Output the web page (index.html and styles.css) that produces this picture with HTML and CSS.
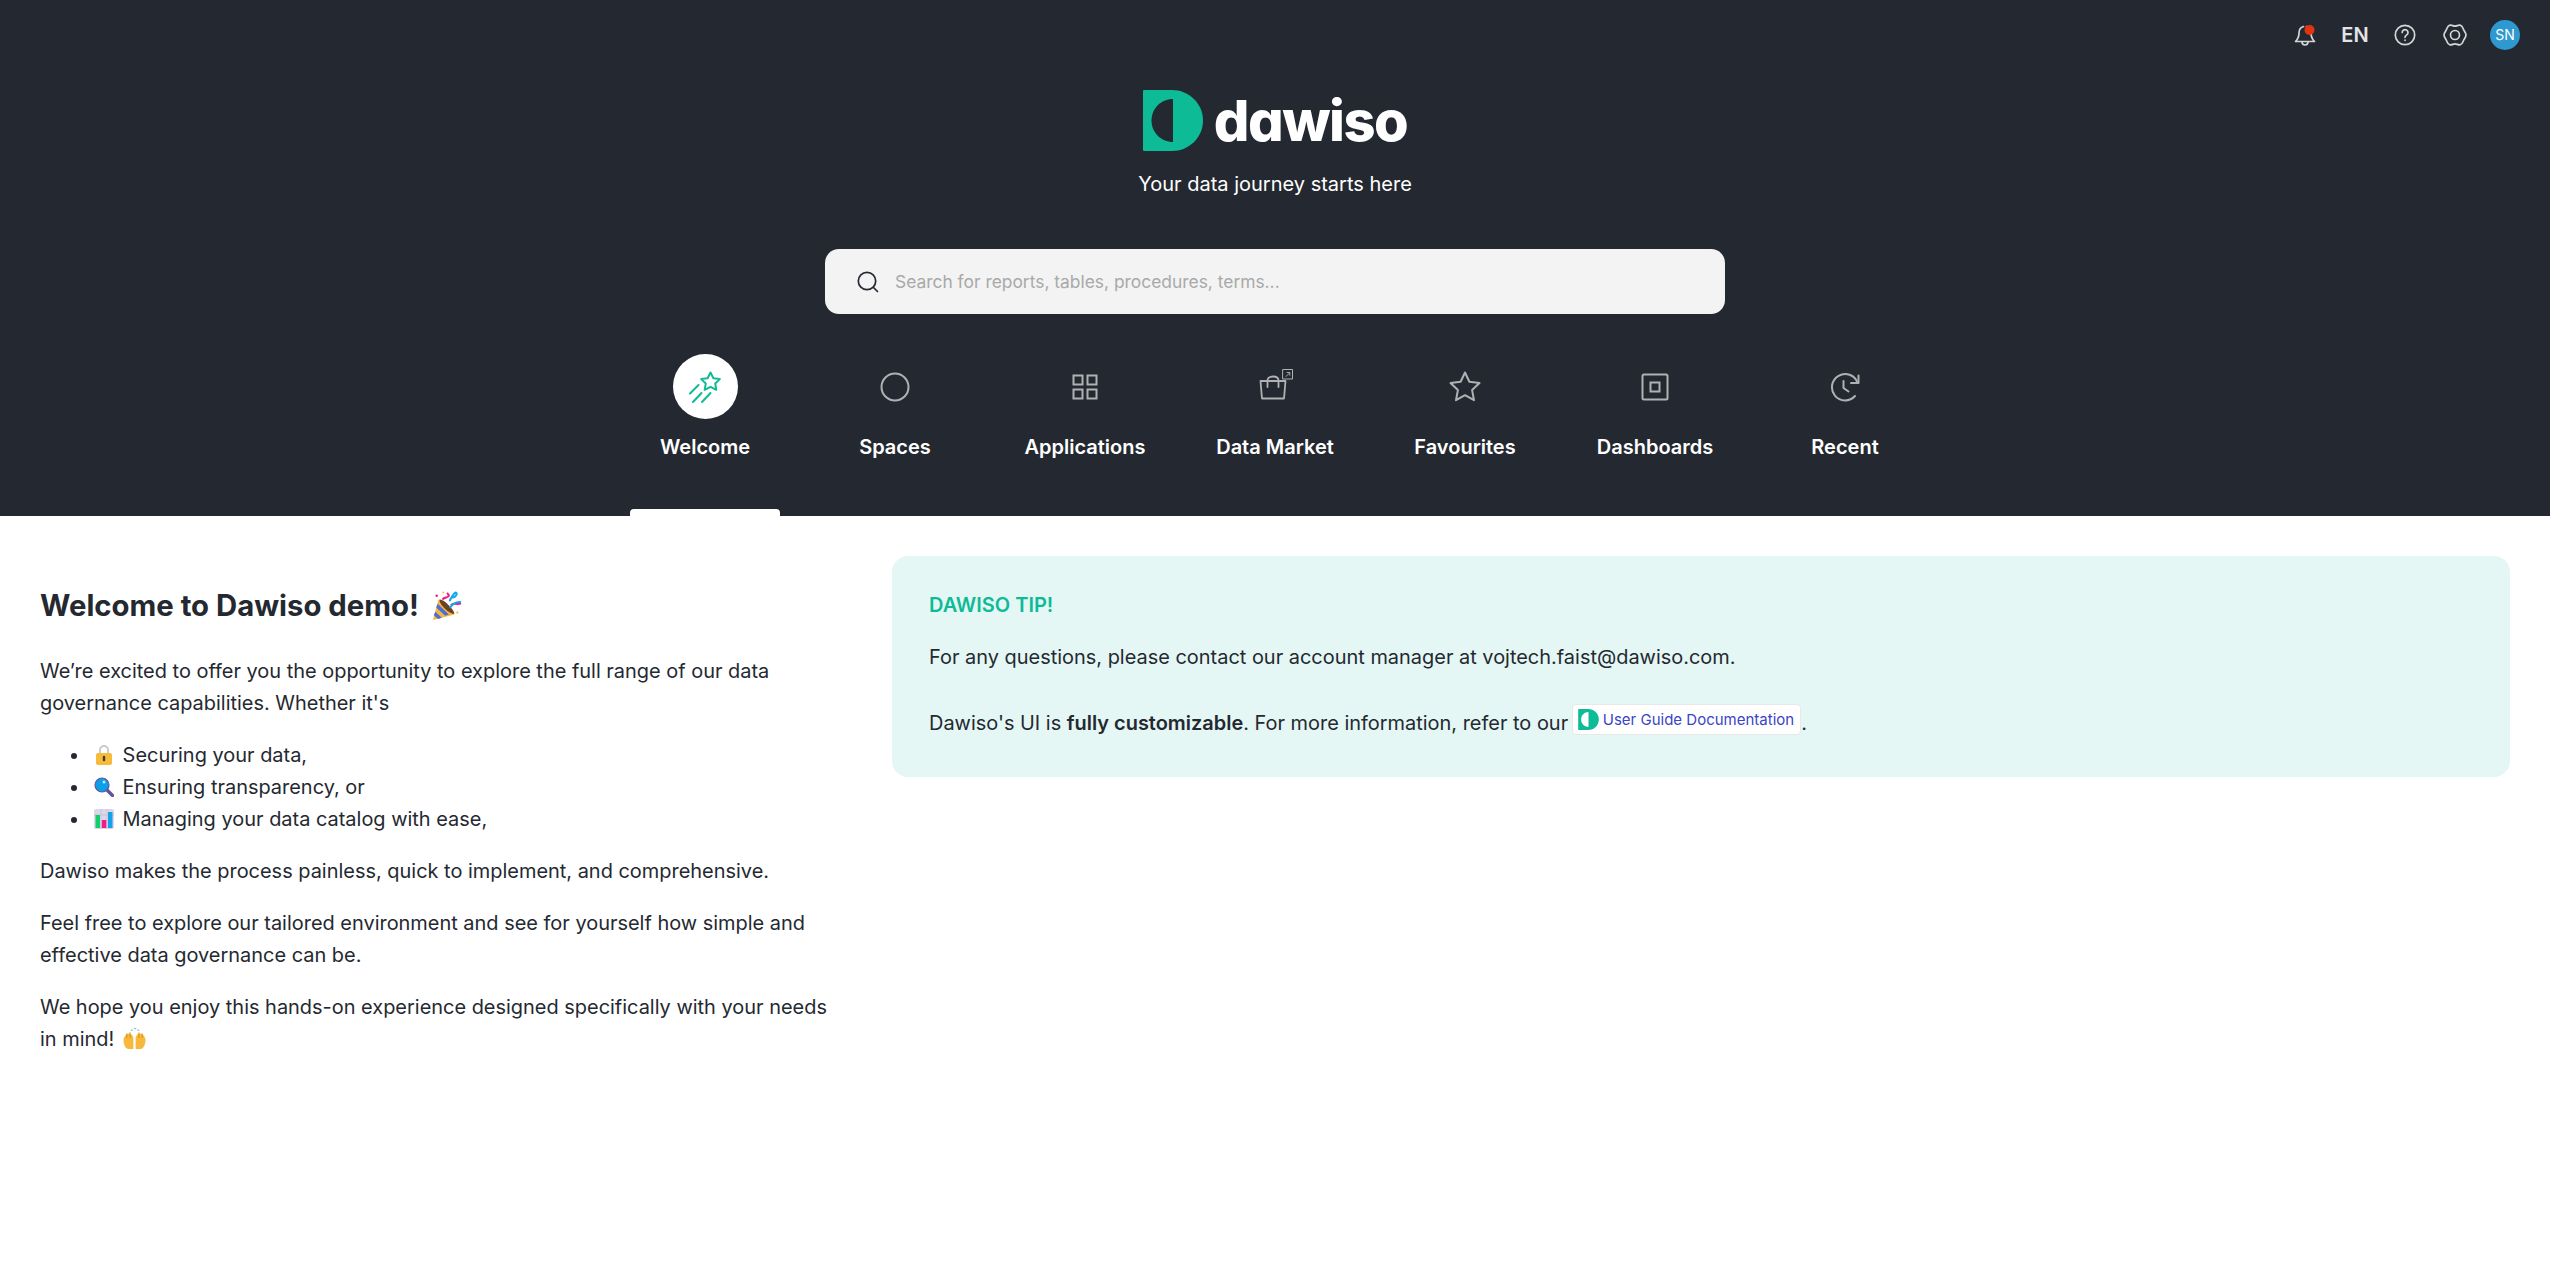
FILE: index.html
```html
<!DOCTYPE html>
<html lang="en">
<head>
    <meta charset="UTF-8">
    <title>Dawiso</title>
    <link rel="stylesheet" href="styles.css">
</head>
<body>
    <header class="hero">
        <div class="topbar">
            <span class="top-icon">
                <svg width="22" height="24" viewBox="0 0 22 24" fill="none" stroke="#d4d5d7" stroke-width="1.7" stroke-linecap="round" stroke-linejoin="round">
                    <path d="M9.500 3.500C6 4.500 5 7 5 10c0 4-1 6-3.500 8.500h19C18 16 17 14 17 10c0-3-1-5.500-4.500-6.500"/>
                    <path d="M8 18.800c0 2 1.300 3.200 3 3.200s3-1.200 3-3.200"/>
                    <circle cx="15.500" cy="7" r="5" fill="#e5330f" stroke="none"/>
                </svg>
            </span>
            <span class="top-icon lang">EN</span>
            <span class="top-icon">
                <svg width="22" height="22" viewBox="0 0 22 22" fill="none" stroke="#d4d5d7" stroke-width="1.7" stroke-linecap="round">
                    <circle cx="11" cy="11" r="9.700"/>
                    <path d="M8.200 8.500a2.900 2.900 0 1 1 4.500 2.400c-1 .7-1.700 1.200-1.700 2.400"/>
                    <path d="M11 16.200v.1"/>
                </svg>
            </span>
            <span class="top-icon">
                <svg width="24" height="24" viewBox="0 0 24 24" fill="none" stroke="#d4d5d7" stroke-width="1.7" stroke-linejoin="round">
                    <path d="M12 3.200C14 3.200 15 1.800 17 2.200 19.500 2.700 19.800 5 20.500 6.500 21.200 8 23 10 23 12 23 14 21.200 16 20.500 17.500 19.800 19 19.500 21.300 17 21.800 15 22.200 14 20.800 12 20.800 10 20.800 9 22.200 7 21.800 4.500 21.300 4.200 19 3.500 17.500 2.800 16 1 14 1 12 1 10 2.800 8 3.500 6.500 4.200 5 4.500 2.700 7 2.200 9 1.800 10 3.200 12 3.200Z"/>
                    <circle cx="12" cy="12" r="4.500"/>
                </svg>
            </span>
            <span class="top-icon avatar">SN</span>
        </div>

        <div class="brand">
            <svg class="brand-mark" width="60" height="61" viewBox="0 0 60 61">
                <path d="M1 0h28c17 0 31 13.500 31 30.500S46 61 29 61H1a1 1 0 0 1-1-1V1a1 1 0 0 1 1-1z" fill="#0dbb97"/>
                <path d="M30 9v43C18 52 8.500 42.500 8.500 30.500S18 9 30 9z" fill="#242931"/>
            </svg>
            <span class="brand-name">dawiso</span>
        </div>
        <p class="tagline">Your data journey starts here</p>

        <div class="search">
            <svg width="22" height="22" viewBox="0 0 22 22" fill="none" stroke="#242931" stroke-width="1.700" stroke-linecap="round">
                <circle cx="10" cy="10" r="8.700"/>
                <path d="M16.500 16.500l4 4"/>
            </svg>
            <span class="search-hint">Search for reports, tables, procedures, terms...</span>
        </div>

        <nav class="tabs">
            <a class="tab active">
                <span class="tab-icon">
                    <svg width="36" height="36" viewBox="0 0 36 36" fill="none" stroke="#0dbb97" stroke-width="2" stroke-linecap="round" stroke-linejoin="round">
                        <path d="M23.500 3.500l2.900 5.800 6.400.8-4.600 4.400 1.100 6.300-5.800-3-5.800 3 1.100-6.300-4.600-4.400 6.400-.8z"/>
                        <path d="M3 24.500l8.500-8.500M6 33l8.500-9M15 33l8.500-9"/>
                    </svg>
                </span>
                <span class="tab-label">Welcome</span>
            </a>
            <a class="tab">
                <span class="tab-icon">
                    <svg width="30" height="30" viewBox="0 0 30 30" fill="none" stroke="#b0b1b3" stroke-width="2"><circle cx="15" cy="15" r="13.500"/></svg>
                </span>
                <span class="tab-label">Spaces</span>
            </a>
            <a class="tab">
                <span class="tab-icon">
                    <svg width="26" height="26" viewBox="0 0 26 26" fill="none" stroke="#b0b1b3" stroke-width="2">
                        <rect x="1.500" y="1.500" width="9" height="9"/>
                        <rect x="15.500" y="1.500" width="9" height="9"/>
                        <rect x="1.500" y="15.500" width="9" height="9"/>
                        <rect x="15.500" y="15.500" width="9" height="9"/>
                    </svg>
                </span>
                <span class="tab-label">Applications</span>
            </a>
            <a class="tab">
                <span class="tab-icon">
                    <svg width="36" height="36" viewBox="0 0 36 36" fill="none" stroke="#b0b1b3" stroke-width="1.800" stroke-linejoin="round" stroke-linecap="round">
                        <path d="M3.500 12h25l-1.500 17.500H5z"/>
                        <path d="M10.500 18V11.500c0-2.500 2-4 5.500-4s5.500 1.500 5.500 4V18"/>
                        <rect x="26" y="0.500" width="9.500" height="9.500" stroke-width="1"/>
                        <path d="M29 7.500l3.500-3.500M30 3.500h2.800v2.800" stroke-width="0.900"/>
                    </svg>
                </span>
                <span class="tab-label">Data Market</span>
            </a>
            <a class="tab">
                <span class="tab-icon">
                    <svg width="32" height="32" viewBox="0 0 32 32" fill="none" stroke="#b0b1b3" stroke-width="2" stroke-linejoin="round">
                        <path d="M16 1.500l4.400 9.300 10.100 1.300-7.400 7 1.900 10.100-9-5-9 5 1.900-10.100-7.400-7 10.100-1.300z"/>
                    </svg>
                </span>
                <span class="tab-label">Favourites</span>
            </a>
            <a class="tab">
                <span class="tab-icon">
                    <svg width="28" height="28" viewBox="0 0 28 28" fill="none" stroke="#b0b1b3" stroke-width="2">
                        <rect x="1.500" y="1.500" width="25" height="25" rx="1.500"/>
                        <rect x="9.500" y="9.500" width="9" height="9"/>
                    </svg>
                </span>
                <span class="tab-label">Dashboards</span>
            </a>
            <a class="tab">
                <span class="tab-icon">
                    <svg width="30" height="30" viewBox="0 0 30 30" fill="none" stroke="#b0b1b3" stroke-width="2" stroke-linecap="round" stroke-linejoin="round">
                        <path d="M27.500 10.500A13.200 13.200 0 1 0 25 24"/>
                        <path d="M28.500 3.500v7.500H21"/>
                        <path d="M13.500 9v7l5 3.500"/>
                    </svg>
                </span>
                <span class="tab-label">Recent</span>
            </a>
        </nav>
    </header>

    <main class="content">
        <section class="intro">
            <h1>Welcome to Dawiso demo! <svg class="emoji emoji-big" viewBox="0 0 32 32"><path d="M1 31l6-22 17 16z" fill="#f5b83d"/><path d="M3.500 22l7 6.500-4 1.300-4.500-4zM6 13.500l12 11.500-4 1.500-9.500-9z" fill="#4a6fd8"/><path d="M8 9c4-1 15 10 16 15-4 2-17-10-16-15z" fill="#6b4226"/><path d="M11 9c3-3 4-1 6-3 2-1 0-3-1-4M20 15c4-3 6 0 11-2" fill="none" stroke="#ee1c8e" stroke-width="2.200"/><path d="M19 11c0-3 2-3 3-6 1-2 3-4 4-3s-1 5-4 5M19 18c3-4 7-7 12-6" fill="none" stroke="#12a9e8" stroke-width="2.200"/><circle cx="5" cy="5" r="1.300" fill="#ee1c8e"/><circle cx="12" cy="1.500" r="1" fill="#f5b83d"/><circle cx="27" cy="23" r="1.200" fill="#f5b83d"/></svg></h1>
            <p>We’re excited to offer you the opportunity to explore the full range of our data governance capabilities. Whether it's</p>
            <ul>
                <li><svg class="emoji" viewBox="0 0 20 20"><path d="M6 9V5a4 4 0 0 1 8 0v4" fill="none" stroke="#c9ccd1" stroke-width="2"/><rect x="2" y="8" width="16" height="12" rx="2" fill="#f6bb3a"/><path d="M10 12v3" stroke="#3d3a30" stroke-width="2.400" stroke-linecap="round"/></svg> Securing your data,</li>
                <li><svg class="emoji" viewBox="0 0 20 20"><path d="M12.500 12.500l6 6" stroke="#62549c" stroke-width="3.400" stroke-linecap="round"/><circle cx="8" cy="8" r="7" fill="#0b9fe8" stroke="#62549c" stroke-width="1.200"/><circle cx="10" cy="5" r="1.500" fill="#b5e8fc"/></svg> Ensuring transparency, or</li>
                <li><svg class="emoji" viewBox="0 0 20 20"><rect width="20" height="20" rx="2" fill="#dcd6ea"/><path d="M7 0v20M13 0v20M0 6h20" stroke="#c6c0d6" stroke-width="0.800"/><rect x="1.500" y="6" width="4.500" height="13" fill="#12cf6e"/><rect x="7.800" y="11" width="4.500" height="8" fill="#ef1c8c"/><rect x="14" y="3" width="4.500" height="16" fill="#12a3e8"/></svg> Managing your data catalog with ease,</li>
            </ul>
            <p>Dawiso makes the process painless, quick to implement, and comprehensive.</p>
            <p>Feel free to explore our tailored environment and see for yourself how simple and effective data governance can be.</p>
            <p>We hope you enjoy this hands-on experience designed specifically with your needs in mind! <svg class="emoji emoji-hands" viewBox="0 0 22 20"><path d="M1 11c0-3 3-6 5-6s4 2 4 5v9H5c-2 0-4-4-4-8z" fill="#f6b93b"/><path d="M21 11c0-3-3-6-5-6s-4 2-4 5v9h5c2 0 4-4 4-8z" fill="#f6b93b"/><path d="M4 5v4M7 4v5M15 4v5M18 5v4" stroke="#dd931c" stroke-width="1"/><path d="M8 2h1M11 .500h1M14 2h1" stroke="#7cc4ee" stroke-width="1.200" stroke-linecap="round"/></svg></p>
        </section>

        <aside class="tip">
            <h2>DAWISO TIP!</h2>
            <p>For any questions, please contact our account manager at vojtech.faist@dawiso.com.</p>
            <p>Dawiso's UI is <strong>fully customizable</strong>. For more information, refer to our <a class="doc-link"><svg width="21" height="21" viewBox="0 0 60 61"><path d="M1 0h28c17 0 31 13.500 31 30.500S46 61 29 61H1a1 1 0 0 1-1-1V1a1 1 0 0 1 1-1z" fill="#0dbb97"/><path d="M30 9v43C18 52 8.500 42.500 8.500 30.500S18 9 30 9z" fill="#fff"/></svg>User Guide Documentation</a>.</p>
        </aside>
    </main>
</body>
</html>
```

FILE: styles.css
```css
body {
    margin: 0;
    font-family: Inter, "Noto Sans", sans-serif;
    font-size: 20px;
    line-height: 32px;
    color: #242931;
    background-color: #ffffff;
}

.hero {
    height: 516px;
    background-color: #242931;
    display: flex;
    flex-direction: column;
    align-items: center;
    overflow: hidden;
}

.topbar {
    align-self: stretch;
    height: 70px;
    padding-right: 30px;
    display: flex;
    justify-content: flex-end;
    align-items: center;
    gap: 20px;
}
.top-icon {
    display: flex;
    width: 30px;
    justify-content: center;
}
.lang {
    font-weight: 600;
    color: #e3e4e5;
}
.avatar {
    height: 30px;
    border-radius: 50%;
    background-color: #2e98d0;
    color: #ffffff;
    font-size: 14px;
    line-height: 30px;
}

.brand {
    margin-top: 20px;
    height: 61px;
    display: flex;
    align-items: center;
    gap: 11px;
}
.brand-name {
    padding-top: 2px;
    font-size: 56px;
    line-height: 59px;
    font-weight: 800;
    color: #ffffff;
    font-feature-settings: "cv11";
    letter-spacing: -1.5px;
}
.tagline {
    margin: 17px 0 0;
    color: #ffffff;
}

.search {
    margin-top: 49px;
    width: 900px;
    height: 65px;
    box-sizing: border-box;
    padding-left: 32px;
    border-radius: 14px;
    background-color: #f3f3f3;
    display: flex;
    align-items: center;
    gap: 16px;
}
.search-hint {
    font-size: 17.4px;
    color: #a9a9a9;
}

.tabs {
    margin-top: 40px;
    display: flex;
    flex: 1;
}
.tab {
    position: relative;
    width: 190px;
    display: flex;
    flex-direction: column;
    align-items: center;
    color: #ffffff;
}
.tab-icon {
    width: 65px;
    height: 65px;
    border-radius: 50%;
    display: flex;
    align-items: center;
    justify-content: center;
}
.tab-label {
    margin-top: 12px;
    font-weight: 600;
}
.tab.active .tab-icon {
    background-color: #ffffff;
}
.tab.active::after {
    content: "";
    position: absolute;
    left: 20px;
    bottom: 0;
    width: 150px;
    height: 7px;
    border-radius: 4px 4px 0 0;
    background-color: #ffffff;
}

.content {
    display: grid;
    grid-template-columns: 812px 1fr;
    gap: 40px;
    padding: 40px 40px 0;
    align-items: start;
    font-size: 19.95px;
}

.intro {
    padding-right: 15px;
}
.intro h1 {
    margin: 30px 0 0;
    font-size: 29.3px;
    line-height: 40px;
    font-weight: 700;
}
.intro p {
    margin: 20px 0 0;
}
.intro h1 + p {
    margin-top: 29px;
}
.intro ul {
    margin: 20px 0 0;
    padding-left: 50px;
}
.emoji {
    width: 20px;
    height: 20px;
    vertical-align: -3px;
    margin: 0 3px 0 4px;
}
.emoji-big {
    width: 30px;
    height: 30px;
    vertical-align: -5px;
    margin-left: 6px;
}
.emoji-hands {
    width: 25px;
    height: 22px;
    vertical-align: -4px;
    margin-left: 2px;
}

.tip {
    height: 221px;
    box-sizing: border-box;
    padding: 33px 37px 0;
    border-radius: 16px;
    background-color: #e4f7f4;
}
.tip h2 {
    margin: 0;
    font-size: 20px;
    line-height: 32px;
    font-weight: 600;
    color: #0dbb97;
}
.tip p {
    margin: 20px 0 0;
}
.tip p + p {
    margin-top: 31px;
}
.tip strong {
    font-weight: 600;
}
.doc-link {
    display: inline-flex;
    align-items: center;
    gap: 4px;
    height: 31px;
    margin-left: -2px;
    padding: 0 6px 0 5px;
    border: 1px solid #e6e8ea;
    border-radius: 4px;
    box-sizing: border-box;
    background-color: #ffffff;
    color: #3a44c6;
    font-size: 15px;
}
```
